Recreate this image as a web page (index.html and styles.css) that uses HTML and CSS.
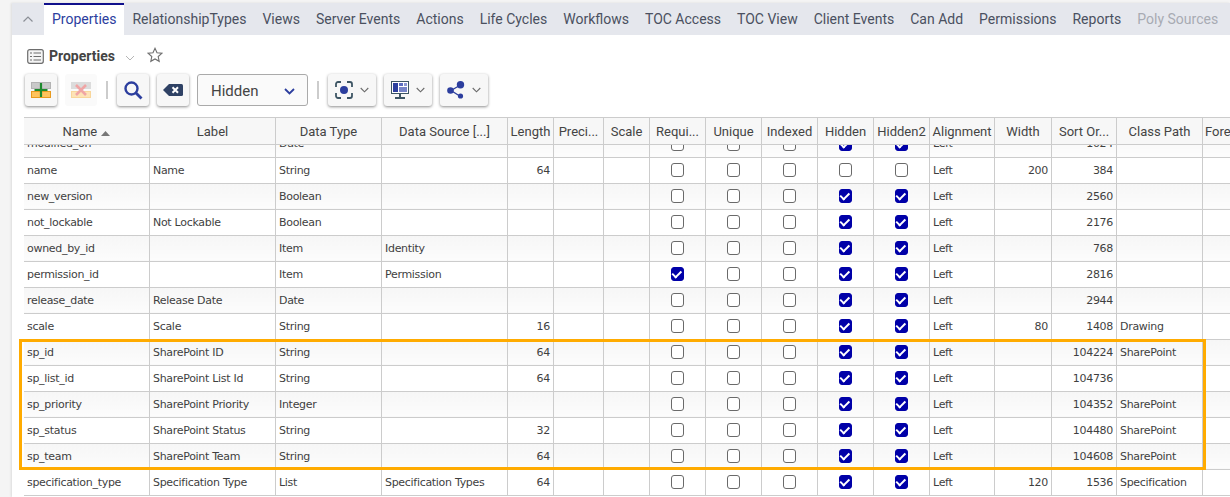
FILE: index.html
```html
<!DOCTYPE html>
<html lang="en">
<head>
<meta charset="utf-8">
<title>Properties</title>
<link rel="stylesheet" href="styles.css">
</head>
<body>
<div class="panel">
  <nav class="tabs">
    <span class="collapse"><svg width="12" height="8" viewBox="0 0 12 8"><path d="M1.5 6.5 6 2l4.500 4.500" fill="none" stroke="#8b8f96" stroke-width="1.200"/></svg></span>
    <a class="tab active">Properties</a>
    <a class="tab">RelationshipTypes</a>
    <a class="tab">Views</a>
    <a class="tab">Server Events</a>
    <a class="tab">Actions</a>
    <a class="tab">Life Cycles</a>
    <a class="tab">Workflows</a>
    <a class="tab">TOC Access</a>
    <a class="tab">TOC View</a>
    <a class="tab">Client Events</a>
    <a class="tab">Can Add</a>
    <a class="tab">Permissions</a>
    <a class="tab">Reports</a>
    <a class="tab disabled">Poly Sources</a>
  </nav>
  <div class="title">
    <svg class="title-icon" width="17" height="15" viewBox="0 0 17 15"><rect x=".7" y=".7" width="15.600" height="13.600" rx="2" fill="#f4f4f4" stroke="#6d6d6d" stroke-width="1.200"/><path d="M3 4h2M3 7.500h2M3 11h2M6.500 4H14M6.500 7.500H14M6.500 11H14" stroke="#6d6d6d" stroke-width="1.200"/></svg>
    <span class="title-text">Properties</span>
    <svg class="title-chev" width="10" height="6" viewBox="0 0 10 6"><path d="M1 1l4 4 4-4" fill="none" stroke="#b5b5b5" stroke-width="1"/></svg>
    <svg class="title-star" width="16" height="16" viewBox="0 0 16 16"><path d="M8 1.300l2 4.500 4.800.5-3.600 3.200 1 4.800L8 11.900l-4.200 2.400 1-4.800L1.200 6.300 6 5.800z" fill="none" stroke="#6f6f6f" stroke-width="1.100"/></svg>
  </div>
  <div class="toolbar">
    <button class="btn"><svg width="20" height="16" viewBox="0 0 20 16"><rect x="0" y="0" width="20" height="7" fill="#b3b3b3"/><rect x="1" y="1" width="18" height="5" fill="#c9c9c9"/><rect x=".5" y="9.500" width="19" height="6" fill="#ffc35c" stroke="#e89a1e"/><path d="M10 1v14M3.500 8H16.500" stroke="#1f8a2e" stroke-width="2.200"/></svg></button>
    <button class="btn off"><svg width="20" height="16" viewBox="0 0 20 16"><rect x="0" y="0" width="20" height="7" fill="#dcdcdc"/><rect x=".5" y="9.500" width="19" height="6" fill="#fde3b6" stroke="#f8d69c"/><path d="M5 3l10 10M15 3 5 13" stroke="#f0a5a5" stroke-width="2.600"/></svg></button>
    <i class="sep"></i>
    <button class="btn"><svg width="20" height="20" viewBox="0 0 20 20"><circle cx="8.500" cy="8.500" r="6" fill="none" stroke="#2c3e9e" stroke-width="2.400"/><path d="M13 13l5.500 5.500" stroke="#2c3e9e" stroke-width="2.800"/></svg></button>
    <button class="btn"><svg width="20" height="12" viewBox="0 0 20 12"><path d="M6 0h12.500a1.500 1.500 0 0 1 1.500 1.500v9a1.500 1.500 0 0 1-1.500 1.500H6L0 6z" fill="#2f4265"/><path d="M9.500 3.200l5.500 5.600M15 3.200 9.500 8.800" stroke="#fff" stroke-width="2"/></svg></button>
    <div class="select"><span>Hidden</span><svg width="11" height="7" viewBox="0 0 11 7"><path d="M1 1l4.500 4.500L10 1" fill="none" stroke="#2c3e9e" stroke-width="1.800"/></svg></div>
    <i class="sep"></i>
    <button class="btn wide"><svg width="18" height="18" viewBox="0 0 18 18"><path d="M1 6V3a2 2 0 0 1 2-2h3M12 1h3a2 2 0 0 1 2 2v3M17 12v3a2 2 0 0 1-2 2h-3M6 17H3a2 2 0 0 1-2-2v-3" fill="none" stroke="#3d5564" stroke-width="1.800"/><circle cx="9" cy="9" r="4" fill="#2c3e9e"/></svg><svg class="chev" width="9" height="6" viewBox="0 0 9 6"><path d="M.7 1l3.800 3.800L8.300 1" fill="none" stroke="#6a6a6a" stroke-width="1.100"/></svg></button>
    <button class="btn wide"><svg width="18" height="18" viewBox="0 0 18 18"><rect x=".5" y=".5" width="17" height="12" fill="#fff" stroke="#3d5564"/><rect x="2" y="2" width="5" height="9" fill="#2c3e9e"/><rect x="8" y="2" width="4" height="3" fill="#5c6cc0"/><rect x="13" y="2" width="3" height="3" fill="#8a96d4"/><rect x="8" y="6" width="8" height="5" fill="#7683c8"/><path d="M9 13v3M4 17h10" stroke="#3d5564" stroke-width="2"/></svg><svg class="chev" width="9" height="6" viewBox="0 0 9 6"><path d="M.7 1l3.800 3.800L8.300 1" fill="none" stroke="#6a6a6a" stroke-width="1.100"/></svg></button>
    <button class="btn wide"><svg width="18" height="18" viewBox="0 0 18 18"><path d="M4 9.500 13.500 4M4 9.500l9.500 6" stroke="#2c3e9e" stroke-width="1.400"/><circle cx="3.500" cy="9.500" r="3.300" fill="#2c3e9e"/><circle cx="13.500" cy="3.800" r="3.700" fill="#2c3e9e"/><circle cx="13.500" cy="15" r="2.600" fill="#2c3e9e"/></svg><svg class="chev" width="9" height="6" viewBox="0 0 9 6"><path d="M.7 1l3.800 3.800L8.300 1" fill="none" stroke="#6a6a6a" stroke-width="1.100"/></svg></button>
  </div>
  <div class="grid-wrap">
    <table class="head">
      <colgroup><col class="c1"><col class="c2"><col class="c3"><col class="c4"><col class="c5"><col class="c6"><col class="c7"><col class="c8"><col class="c9"><col class="c10"><col class="c11"><col class="c12"><col class="c13"><col class="c14"><col class="c15"><col class="c16"><col class="c17"></colgroup>
      <tr><th>Name <svg class="sort" width="9" height="5" viewBox="0 0 9 5"><path d="M4.500 0 9 5H0z" fill="#777"/></svg></th><th>Label</th><th>Data Type</th><th>Data Source [...]</th><th>Length</th><th>Preci...</th><th>Scale</th><th>Requi...</th><th>Unique</th><th>Indexed</th><th>Hidden</th><th>Hidden2</th><th>Alignment</th><th>Width</th><th>Sort Or...</th><th>Class Path</th><th class="clip">Fore</th></tr>
    </table>
    <div class="body-clip">
      <table class="body">
        <colgroup><col class="c1"><col class="c2"><col class="c3"><col class="c4"><col class="c5"><col class="c6"><col class="c7"><col class="c8"><col class="c9"><col class="c10"><col class="c11"><col class="c12"><col class="c13"><col class="c14"><col class="c15"><col class="c16"><col class="c17"></colgroup>
        <tr class="odd"><td>modified_on</td><td></td><td>Date</td><td></td><td class="n"></td><td></td><td></td><td class="k"><b></b></td><td class="k"><b></b></td><td class="k"><b></b></td><td class="k"><b class="on"></b></td><td class="k"><b class="on"></b></td><td>Left</td><td class="n"></td><td class="n">1024</td><td></td><td></td></tr>
        <tr><td>name</td><td>Name</td><td>String</td><td></td><td class="n">64</td><td></td><td></td><td class="k"><b></b></td><td class="k"><b></b></td><td class="k"><b></b></td><td class="k"><b></b></td><td class="k"><b></b></td><td>Left</td><td class="n">200</td><td class="n">384</td><td></td><td></td></tr>
        <tr class="odd"><td>new_version</td><td></td><td>Boolean</td><td></td><td class="n"></td><td></td><td></td><td class="k"><b></b></td><td class="k"><b></b></td><td class="k"><b></b></td><td class="k"><b class="on"></b></td><td class="k"><b class="on"></b></td><td>Left</td><td class="n"></td><td class="n">2560</td><td></td><td></td></tr>
        <tr><td>not_lockable</td><td>Not Lockable</td><td>Boolean</td><td></td><td class="n"></td><td></td><td></td><td class="k"><b></b></td><td class="k"><b></b></td><td class="k"><b></b></td><td class="k"><b class="on"></b></td><td class="k"><b class="on"></b></td><td>Left</td><td class="n"></td><td class="n">2176</td><td></td><td></td></tr>
        <tr class="odd"><td>owned_by_id</td><td></td><td>Item</td><td>Identity</td><td class="n"></td><td></td><td></td><td class="k"><b></b></td><td class="k"><b></b></td><td class="k"><b></b></td><td class="k"><b class="on"></b></td><td class="k"><b class="on"></b></td><td>Left</td><td class="n"></td><td class="n">768</td><td></td><td></td></tr>
        <tr><td>permission_id</td><td></td><td>Item</td><td>Permission</td><td class="n"></td><td></td><td></td><td class="k"><b class="on"></b></td><td class="k"><b></b></td><td class="k"><b></b></td><td class="k"><b class="on"></b></td><td class="k"><b class="on"></b></td><td>Left</td><td class="n"></td><td class="n">2816</td><td></td><td></td></tr>
        <tr class="odd"><td>release_date</td><td>Release Date</td><td>Date</td><td></td><td class="n"></td><td></td><td></td><td class="k"><b></b></td><td class="k"><b></b></td><td class="k"><b></b></td><td class="k"><b class="on"></b></td><td class="k"><b class="on"></b></td><td>Left</td><td class="n"></td><td class="n">2944</td><td></td><td></td></tr>
        <tr><td>scale</td><td>Scale</td><td>String</td><td></td><td class="n">16</td><td></td><td></td><td class="k"><b></b></td><td class="k"><b></b></td><td class="k"><b></b></td><td class="k"><b class="on"></b></td><td class="k"><b class="on"></b></td><td>Left</td><td class="n">80</td><td class="n">1408</td><td>Drawing</td><td></td></tr>
        <tr class="odd"><td>sp_id</td><td>SharePoint ID</td><td>String</td><td></td><td class="n">64</td><td></td><td></td><td class="k"><b></b></td><td class="k"><b></b></td><td class="k"><b></b></td><td class="k"><b class="on"></b></td><td class="k"><b class="on"></b></td><td>Left</td><td class="n"></td><td class="n">104224</td><td>SharePoint</td><td></td></tr>
        <tr><td>sp_list_id</td><td>SharePoint List Id</td><td>String</td><td></td><td class="n">64</td><td></td><td></td><td class="k"><b></b></td><td class="k"><b></b></td><td class="k"><b></b></td><td class="k"><b class="on"></b></td><td class="k"><b class="on"></b></td><td>Left</td><td class="n"></td><td class="n">104736</td><td></td><td></td></tr>
        <tr class="odd"><td>sp_priority</td><td>SharePoint Priority</td><td>Integer</td><td></td><td class="n"></td><td></td><td></td><td class="k"><b></b></td><td class="k"><b></b></td><td class="k"><b></b></td><td class="k"><b class="on"></b></td><td class="k"><b class="on"></b></td><td>Left</td><td class="n"></td><td class="n">104352</td><td>SharePoint</td><td></td></tr>
        <tr><td>sp_status</td><td>SharePoint Status</td><td>String</td><td></td><td class="n">32</td><td></td><td></td><td class="k"><b></b></td><td class="k"><b></b></td><td class="k"><b></b></td><td class="k"><b class="on"></b></td><td class="k"><b class="on"></b></td><td>Left</td><td class="n"></td><td class="n">104480</td><td>SharePoint</td><td></td></tr>
        <tr class="odd"><td>sp_team</td><td>SharePoint Team</td><td>String</td><td></td><td class="n">64</td><td></td><td></td><td class="k"><b></b></td><td class="k"><b></b></td><td class="k"><b></b></td><td class="k"><b class="on"></b></td><td class="k"><b class="on"></b></td><td>Left</td><td class="n"></td><td class="n">104608</td><td>SharePoint</td><td></td></tr>
        <tr><td>specification_type</td><td>Specification Type</td><td>List</td><td>Specification Types</td><td class="n">64</td><td></td><td></td><td class="k"><b></b></td><td class="k"><b></b></td><td class="k"><b></b></td><td class="k"><b class="on"></b></td><td class="k"><b class="on"></b></td><td>Left</td><td class="n">120</td><td class="n">1536</td><td>Specification</td><td></td></tr>
      </table>
    </div>
    <div class="highlight"></div>
  </div>
</div>
</body>
</html>
```

FILE: styles.css
```css
* { box-sizing: border-box; }
html, body { margin: 0; height: 497px; overflow: hidden; }
body { background: #f4f4f4; padding: 3px 0 0 12px; font-family: Roboto, sans-serif; color: #3d3d3d; }
.panel { width: 1218px; height: 494px; background: #fff; box-shadow: -1px 0 2px #dcdcdc; overflow: hidden; }
.tabs { display: flex; height: 32px; background: #e5e7ed; width: 1218px; white-space: nowrap; }
.collapse { width: 32px; display: flex; align-items: center; justify-content: center; }
.tab { height: 32px; padding: 5px 8px 0; margin-right: 0; font-size: 14px; line-height: 22px; color: #4a5060; flex: none; }
.tab.active { background: #fff; color: #2c3e9e; border-top: 2px solid #10108c; padding-top: 3px; }
.tab.disabled { color: #a8abb3; }
.title { display: flex; align-items: center; height: 24px; margin-top: 9px; padding-left: 15px; }
.title-icon { margin-right: 5px; }
.title-text { font-size: 14px; font-weight: 700; color: #444; }
.title-chev { margin: 3px 0 0 10px; }
.title-star { margin: -2px 0 0 12px; }
.toolbar { display: flex; align-items: center; height: 32px; margin-top: 6px; padding-left: 13px; gap: 8px; }
.btn { width: 32px; height: 32px; padding: 0; border: 0; border-radius: 3px; background: #f7f7f7; box-shadow: 0 1px 3px rgba(0,0,0,.45); display: flex; align-items: center; justify-content: center; }
.btn.off { background: #fafafa; box-shadow: none; }
.btn.wide { width: 48px; gap: 7px; }
.sep { width: 2px; height: 18px; background: #ccc; margin: 0 1px; }
.select { width: 111px; height: 32px; border: 1px solid #aaa; border-radius: 3px; background: #fafafa; display: flex; align-items: center; justify-content: space-between; padding: 2px 12px 0 13px; font-size: 15px; color: #444; }
.grid-wrap { position: relative; margin-top: 11px; margin-left: 12px; width: 1206px; }
table { border-collapse: collapse; table-layout: fixed; width: 1206px; }
.c1 { width: 125.500px; } .c2 { width: 126px; } .c3 { width: 106px; } .c4 { width: 126px; } .c5 { width: 46px; } .c6 { width: 50px; } .c7 { width: 46px; } .c8 { width: 56px; } .c9 { width: 56px; } .c10 { width: 56px; } .c11 { width: 56px; } .c12 { width: 56px; } .c13 { width: 65px; } .c14 { width: 57px; } .c15 { width: 65px; } .c16 { width: 86px; } .c17 { width: 28px; }
.head { background: #f7f7f7; }
th { height: 27px; padding: 0; border: 1px solid #ccc; border-left-width: 0; font-weight: 400; font-size: 13px; color: #444; text-align: center; overflow: hidden; white-space: nowrap; }
th.clip { text-align: left; padding-left: 2px; border-right: 0; }
.sort { margin-left: 1px; }
.body-clip { height: 352px; overflow: hidden; }
.body { margin-top: -14px; }
td { height: 26px; padding: 0 3px; border-right: 1px solid #ccc; border-bottom: 1px solid #ccc; font-family: "DejaVu Sans", sans-serif; font-size: 11px; letter-spacing: -.3px; color: #3f3f3f; white-space: nowrap; overflow: hidden; }
td:last-child { border-right: 0; }
.odd td { background: linear-gradient(#f6f6f6, #fcfcfc); }
td.n { text-align: right; }
td.k { text-align: center; padding: 0; }
b { display: inline-flex; align-items: center; justify-content: center; vertical-align: middle; width: 13px; height: 14px; border: 1.500px solid #6a6a6a; border-radius: 3px; background: #fff; }
b.on { background: #0000a8; border-color: #0000a8; }
b.on::after { content: ""; width: 7px; height: 4px; border-left: 2px solid #fff; border-bottom: 2px solid #fff; transform: rotate(-45deg) translate(0, -1px); }
.highlight { position: absolute; left: -5px; top: 221.500px; width: 1187px; height: 131px; border: 3px solid #ffab00; pointer-events: none; }
```
